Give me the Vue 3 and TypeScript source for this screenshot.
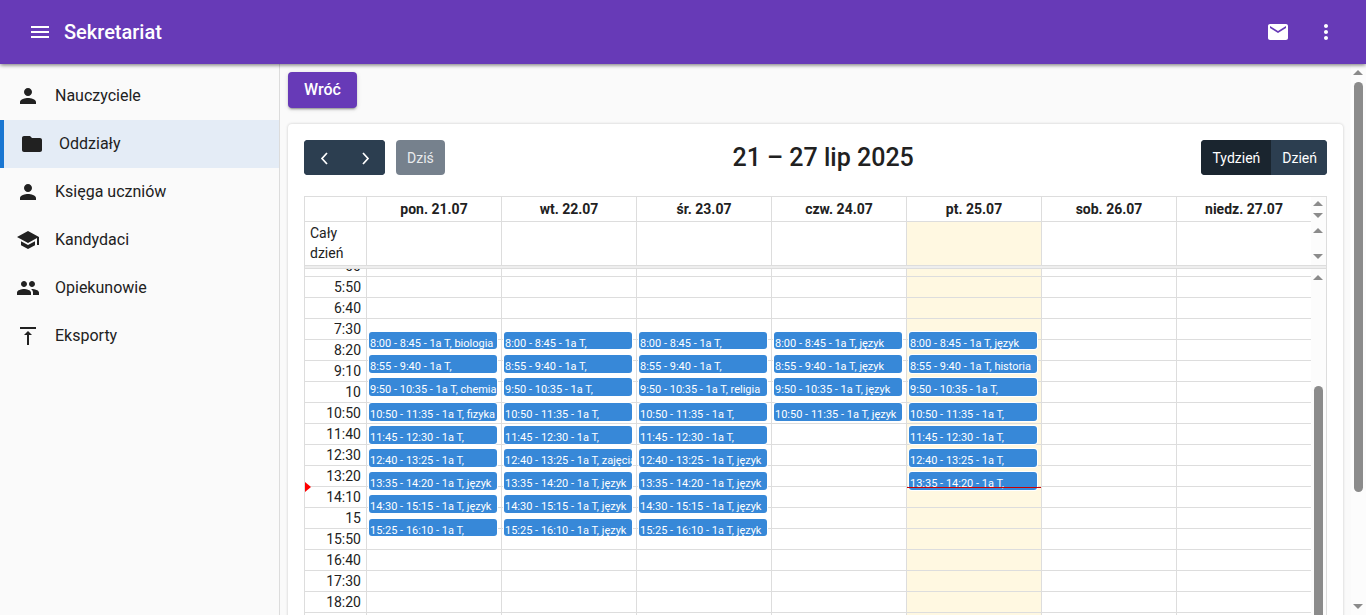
<script setup lang="ts">
interface NavItem { label: string; icon: string; active?: boolean }
interface Lesson { from: string; to: string; subject: string }
interface Day { label: string; today?: boolean; lessons: Lesson[] }

const icons = {
  person: 'M12 12c2.21 0 4-1.79 4-4s-1.79-4-4-4-4 1.79-4 4 1.79 4 4 4zm0 2c-2.67 0-8 1.34-8 4v2h16v-2c0-2.66-5.33-4-8-4z',
  folder: 'M10 4H4c-1.1 0-1.99.9-1.99 2L2 18c0 1.1.9 2 2 2h16c1.1 0 2-.9 2-2V8c0-1.1-.9-2-2-2h-8l-2-2z',
  school: 'M5 13.18v4L12 21l7-3.82v-4L12 17l-7-3.82zM12 3L1 9l11 6 9-4.91V17h2V9L12 3z',
  people: 'M16 11c1.66 0 2.99-1.34 2.99-3S17.66 5 16 5c-1.66 0-3 1.34-3 3s1.34 3 3 3zm-8 0c1.66 0 2.99-1.34 2.99-3S9.66 5 8 5C6.34 5 5 6.34 5 8s1.34 3 3 3zm0 2c-2.33 0-7 1.17-7 3.5V19h14v-2.5c0-2.33-4.67-3.5-7-3.5zm8 0c-.29 0-.62.02-.97.05 1.16.84 1.97 1.97 1.97 3.45V19h6v-2.5c0-2.33-4.67-3.5-7-3.5z',
  upload: 'M8 11h3v10h2V11h3l-4-4-4 4zM4 3v2h16V3H4z',
  menu: 'M3 18h18v-2H3v2zm0-5h18v-2H3v2zm0-7v2h18V6H3z',
  mail: 'M20 4H4c-1.1 0-1.99.9-1.99 2L2 18c0 1.1.9 2 2 2h16c1.1 0 2-.9 2-2V6c0-1.1-.9-2-2-2zm0 4l-8 5-8-5V6l8 5 8-5v2z',
  more: 'M12 8c1.1 0 2-.9 2-2s-.9-2-2-2-2 .9-2 2 .9 2 2 2zm0 2c-1.1 0-2 .9-2 2s.9 2 2 2 2-.9 2-2-.9-2-2-2zm0 6c-1.1 0-2 .9-2 2s.9 2 2 2 2-.9 2-2-.9-2-2-2z',
}

const nav: NavItem[] = [
  { label: 'Nauczyciele', icon: icons.person },
  { label: 'Oddziały', icon: icons.folder, active: true },
  { label: 'Księga uczniów', icon: icons.person },
  { label: 'Kandydaci', icon: icons.school },
  { label: 'Opiekunowie', icon: icons.people },
  { label: 'Eksporty', icon: icons.upload },
]

const periods: [string, string][] = [
  ['8:00', '8:45'], ['8:55', '9:40'], ['9:50', '10:35'], ['10:50', '11:35'], ['11:45', '12:30'],
  ['12:40', '13:25'], ['13:35', '14:20'], ['14:30', '15:15'], ['15:25', '16:10'],
]
const plan = (...subjects: string[]): Lesson[] =>
  subjects.map((subject, i) => ({ from: periods[i][0], to: periods[i][1], subject }))

const days: Day[] = [
  { label: 'pon. 21.07', lessons: plan('biologia', '', 'chemia', 'fizyka', '', '', 'język', 'język', '') },
  { label: 'wt. 22.07', lessons: plan('', '', '', '', '', 'zajęcia', 'język', 'język', 'język') },
  { label: 'śr. 23.07', lessons: plan('', '', 'religia', '', '', 'język', 'język', 'język', 'język') },
  { label: 'czw. 24.07', lessons: plan('język', 'język', 'język', 'język') },
  { label: 'pt. 25.07', today: true, lessons: plan('język', 'historia', '', '', '', '', '') },
  { label: 'sob. 26.07', lessons: [] },
  { label: 'niedz. 27.07', lessons: [] },
]

const step = 50
const dayStart = 5 * 60
const slotCount = 18
const range = step * slotCount
const slots = Array.from({ length: slotCount }, (_, i) => {
  if (i === 0) return '00'
  const t = dayStart + i * step
  const m = t % 60
  return Math.floor(t / 60) + (m ? ':' + String(m).padStart(2, '0') : '')
})

const minutes = (t: string): number => {
  const [h, m] = t.split(':').map(Number)
  return h * 60 + m
}
const pct = (m: number): string => (m / range) * 100 + '%'
const place = (l: Lesson) => ({
  top: pct(minutes(l.from) - dayStart),
  height: pct(minutes(l.to) - minutes(l.from)),
})
const now = { top: pct(minutes('14:10') - dayStart) }
</script>

<template>
  <div class="app">
    <header class="bar">
      <button class="icon-btn" type="button" aria-label="Menu">
        <svg viewBox="0 0 24 24"><path :d="icons.menu" /></svg>
      </button>
      <h1>Sekretariat</h1>
      <button class="icon-btn" type="button" aria-label="Wiadomości">
        <svg viewBox="0 0 24 24"><path :d="icons.mail" /></svg>
      </button>
      <button class="icon-btn" type="button" aria-label="Więcej">
        <svg viewBox="0 0 24 24"><path :d="icons.more" /></svg>
      </button>
    </header>

    <div class="shell">
      <nav class="side">
        <a v-for="n in nav" :key="n.label" href="#" :class="{ active: n.active }">
          <svg viewBox="0 0 24 24"><path :d="n.icon" /></svg>
          <span>{{ n.label }}</span>
        </a>
      </nav>

      <main>
        <button class="back" type="button">Wróć</button>

        <section class="card">
          <div class="toolbar">
            <div class="tools">
              <div class="group">
                <button type="button" class="arrow" aria-label="Poprzedni">
                  <svg viewBox="0 0 16 16"><path d="M11 3L6 8.500l5 5.500" /></svg>
                </button>
                <button type="button" class="arrow" aria-label="Następny">
                  <svg viewBox="0 0 16 16"><path d="M6 3l5 5.500L6 14" /></svg>
                </button>
              </div>
              <button type="button" class="today-btn" disabled>Dziś</button>
            </div>
            <h2>21 – 27 lip 2025</h2>
            <div class="group">
              <button type="button" class="pressed">Tydzień</button>
              <button type="button">Dzień</button>
            </div>
          </div>

          <div class="calendar">
            <div class="line head">
              <div class="axis"></div>
              <div v-for="d in days" :key="d.label" class="col">{{ d.label }}</div>
              <div class="track" aria-hidden="true"><i class="up"></i><i class="down"></i></div>
            </div>
            <div class="line all-day">
              <div class="axis">Cały dzień</div>
              <div v-for="d in days" :key="d.label" class="col" :class="{ today: d.today }"></div>
              <div class="track" aria-hidden="true"><i class="up"></i><i class="down"></i></div>
            </div>
            <div class="divider"></div>
            <div class="body">
              <div class="grid">
                <div class="axis">
                  <div v-for="s in slots" :key="s" class="slot">{{ s }}</div>
                  <span class="now-arrow" :style="now"></span>
                </div>
                <div v-for="d in days" :key="d.label" class="col" :class="{ today: d.today }">
                  <div v-for="s in slots" :key="s" class="slot"></div>
                  <div class="lessons">
                    <a v-for="l in d.lessons" :key="l.from" href="#" class="lesson" :style="place(l)">
                      <span>{{ l.from }} - {{ l.to }} - 1a T, {{ l.subject }}</span>
                    </a>
                    <div v-if="d.today" class="now-line" :style="now"></div>
                  </div>
                </div>
              </div>
              <div class="track" aria-hidden="true"><i class="up"></i><b class="inner-thumb"></b></div>
            </div>
          </div>
        </section>
      </main>

      <div class="track page-track" aria-hidden="true">
        <i class="up"></i><b class="page-thumb"></b><i class="down"></i>
      </div>
    </div>
  </div>
</template>

<style>
html, body { margin: 0; overflow: hidden; }
</style>

<style scoped>
.app, .app * { box-sizing: border-box; }
.app {
  height: 100vh;
  display: flex;
  flex-direction: column;
  overflow: hidden;
  background: #fafafa;
  color: #212121;
  font: 16px/20px Roboto, "Liberation Sans", sans-serif;
}
button { font: inherit; border: 0; padding: 0; cursor: pointer; }
a { color: inherit; text-decoration: none; }
svg { display: block; width: 24px; height: 24px; fill: currentColor; }

.bar {
  flex: none;
  height: 64px;
  display: flex;
  align-items: center;
  padding: 0 16px;
  background: #673ab7;
  color: #fff;
  box-shadow: 0 2px 4px -1px rgba(0, 0, 0, .2), 0 1px 4px rgba(0, 0, 0, .4);
  z-index: 2;
}
.bar h1 { flex: 1; margin: 0; font-size: 20px; line-height: 32px; font-weight: 500; }
.icon-btn { width: 48px; height: 48px; display: grid; place-items: center; background: none; color: #fff; }

.shell { flex: 1; min-height: 0; display: flex; }
.side { flex: none; width: 280px; padding-top: 8px; border-right: 1px solid #dcdcdc; }
.side a { display: flex; align-items: center; height: 48px; padding: 0 16px; gap: 15px; }
.side a.active { background: #e4ecf6; border-left: 4px solid #1976d2; }

main { flex: 1; min-width: 0; padding: 8px; overflow: hidden; }
.back {
  display: block;
  height: 36px;
  padding: 0 16px;
  border-radius: 4px;
  background: #673ab7;
  color: #fff;
  font-weight: 500;
  box-shadow: 0 3px 1px -2px rgba(0, 0, 0, .2), 0 2px 2px rgba(0, 0, 0, .14), 0 1px 5px rgba(0, 0, 0, .12);
}
.card {
  margin-top: 16px;
  padding: 16px;
  border-radius: 4px;
  background: #fff;
  box-shadow: 0 0 3px rgba(0, 0, 0, .2);
  font-size: 14px;
}
.toolbar { display: flex; align-items: center; justify-content: space-between; height: 35px; margin-bottom: 21px; }
.toolbar h2 { margin: 0; font-size: 25px; line-height: 35px; font-weight: 500; }
.tools { display: flex; gap: 11px; }
.group { display: flex; gap: 1px; border-radius: 4px; overflow: hidden; background: #2c3e50; }
.toolbar button { height: 35px; padding: 0 10px; background: #2c3e50; color: #fff; }
.toolbar .arrow { width: 40px; padding: 0 12px; }
.arrow svg { width: 16px; height: 16px; fill: none; stroke: currentColor; stroke-width: 1.7; }
.toolbar .today-btn { padding: 0 11px; border-radius: 4px; background: #76818d; color: #e9ebed; }
.toolbar .pressed { padding: 0 11px; background: #1a252f; }

.calendar { border: 1px solid #ddd; }
.line { display: flex; }
.axis { position: relative; flex: none; width: 62px; border-right: 1px solid #ddd; }
.col { position: relative; flex: 1; min-width: 0; border-right: 1px solid #ddd; }
.col:nth-last-child(2), .grid .col:last-child { border-right: 0; }
.grid .col:nth-last-child(2) { border-right: 1px solid #ddd; }
.head { height: 24px; font-weight: 700; text-align: center; line-height: 24px; }
.all-day { height: 44px; }
.all-day .axis, .all-day .col { border-top: 1px solid #ddd; }
.all-day .axis { padding: 1px 5px; }
.today { background: #fff8e1; }
.divider { height: 4px; border: solid #ddd; border-width: 1px 0; background: #eee; }
.body { display: flex; overflow: hidden; }
.grid { flex: 1; min-width: 0; display: flex; margin-top: -14px; }
.slot { height: 21px; border-top: 1px solid #ddd; line-height: 21px; }
.axis .slot { padding-right: 5px; text-align: right; }

.lessons { position: absolute; inset: 1px 4px -1px 2px; }
.lesson { position: absolute; left: 0; right: 0; padding-bottom: 1px; }
.lesson span {
  display: block;
  height: 100%;
  padding: 3px 1px 0;
  border-radius: 3px;
  background: #3788d8;
  box-shadow: 0 0 0 1px #fff;
  color: #fff;
  font-size: 11px;
  line-height: 18px;
  white-space: nowrap;
  overflow: hidden;
}
.now-line { position: absolute; left: -2px; right: -4px; border-top: 1px solid #c00; }
.now-arrow {
  position: absolute;
  left: 0;
  margin-top: -4px;
  border: solid transparent;
  border-width: 5px 0 5px 6px;
  border-left-color: red;
}

.track {
  flex: none;
  width: 15px;
  padding: 4px 0 3px;
  display: flex;
  flex-direction: column;
  align-items: center;
  justify-content: space-between;
  background: #fcfcfc;
}
.track i { margin-right: 1px; border: solid transparent; border-width: 0 5px; }
.track .up { border-bottom: 5px solid #8b8b8b; }
.track .down { border-top: 5px solid #8b8b8b; }
.all-day .track { padding: 7px 0 6px; }
.body .track { justify-content: flex-start; padding: 6px 0 0; }
.track b { width: 9px; border-radius: 5px; background: #8b8b8b; }
.inner-thumb { flex: 1; margin-top: 106px; }
.page-track { justify-content: flex-start; padding: 6px 0; }
.page-thumb { height: 76%; margin: 7px 0 auto; }
</style>
